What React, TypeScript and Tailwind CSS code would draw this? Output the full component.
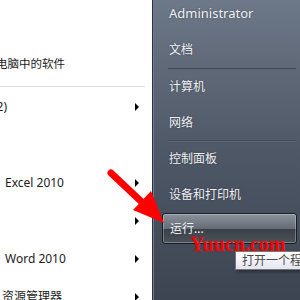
import React from 'react'

const font = { fontFamily: '"Noto Sans", "Noto Sans CJK SC", sans-serif' }

function Arrow() {
  return (
    <span className="w-0 h-0 border-t-[4px] border-b-[4px] border-l-[4px] border-t-transparent border-b-transparent border-l-black" />
  )
}

function LeftRow({ label, arrow = true, offset = '' }: { label?: string; arrow?: boolean; offset?: string }) {
  return (
    <div className="h-[38px] shrink-0 flex items-center justify-between pr-[13px] pl-[5px]">
      <span className={`text-[12px] text-[#1c1c1c] whitespace-nowrap ${offset}`}>{label}</span>
      {arrow && <Arrow />}
    </div>
  )
}

function RightRow({ label, h = 'h-[36px]', size = 'text-[12px]' }: { label: string; h?: string; size?: string }) {
  return (
    <div className={`${h} shrink-0 flex items-center pl-[16px] ${size} text-[#eef1f5] [text-shadow:0_0_2px_rgba(0,0,0,0.35)]`}>
      {label}
    </div>
  )
}

function Sep() {
  return <div className="shrink-0 ml-[15px] mr-[4px] h-px bg-[#434b57] shadow-[0_1px_0_#5d6673]" />
}

export default function App() {
  return (
    <div className="relative w-[300px] h-[300px] overflow-hidden flex" style={font}>
      {/* left: programs list */}
      <div className="w-[152px] shrink-0 bg-white pt-[45px]">
        <div className="h-[38px] flex items-center">
          <span className="text-[11.5px] text-[#1c1c1c] whitespace-nowrap ml-[-4px]">电脑中的软件</span>
        </div>
        <div className="mt-[3px] mr-[7px] h-px bg-[#dce3eb]" />
        <div className="mt-[1px]">
          <LeftRow label="(2)" offset="ml-[-12px]" />
          <div className="h-[38px]" />
          <LeftRow label="Excel 2010" />
          <LeftRow />
          <LeftRow label="Word 2010" />
          <LeftRow label="资源管理器" offset="ml-[-3px]" />
        </div>
      </div>

      {/* right: places */}
      <div className="flex-1 flex flex-col border-l border-[#2c333d] shadow-[inset_1px_0_0_#737d89] bg-linear-to-b from-[#6d7888] via-[#4f5867] to-[#3d4552]">
        <RightRow label="Administrator" h="h-[28px]" size="text-[13px]" />
        <div className="mt-[4px]">
          <RightRow label="文档" />
        </div>
        <Sep />
        <RightRow label="计算机" />
        <RightRow label="网络" h="h-[35px]" />
        <Sep />
        <RightRow label="控制面板" />
        <RightRow label="设备和打印机" />
        <div className="shrink-0 ml-[9px] mr-[3px] h-[31px] rounded-[3px] border border-[#1b1f25] shadow-[inset_0_0_0_1px_rgba(255,255,255,0.28)] bg-[linear-gradient(to_bottom,#8a929c_0%,#656c76_50%,#3a4047_52%,#4b525a_100%)] flex items-center pl-[7px] text-[12px] text-[#f2f4f7]">
          运行...
        </div>
      </div>

      {/* tooltip */}
      <div className="absolute left-[235px] top-[251px] w-[80px] h-[19px] border border-[#767676] bg-linear-to-b from-white to-[#e4e5f0] shadow-[2px_2px_3px_rgba(0,0,0,0.35)] flex items-center pl-[6px] text-[12px] text-[#4a4a4a] whitespace-nowrap">
        打开一个程
      </div>

      {/* watermark */}
      <div
        className="absolute left-[190px] top-[234px] text-[20px] font-bold leading-none text-[#ff0000]"
        style={{ fontFamily: '"Liberation Serif", serif' }}
      >
        Yuucn.com
      </div>

      {/* red pointer arrow */}
      <svg className="absolute left-0 top-0 pointer-events-none" width="300" height="300" viewBox="0 0 300 300">
        <line x1="111" y1="173" x2="146" y2="206" stroke="#ff0000" strokeWidth="7" strokeLinecap="round" />
        <polygon points="151,191 133,210 164,223" fill="#ff0000" />
      </svg>
    </div>
  )
}
